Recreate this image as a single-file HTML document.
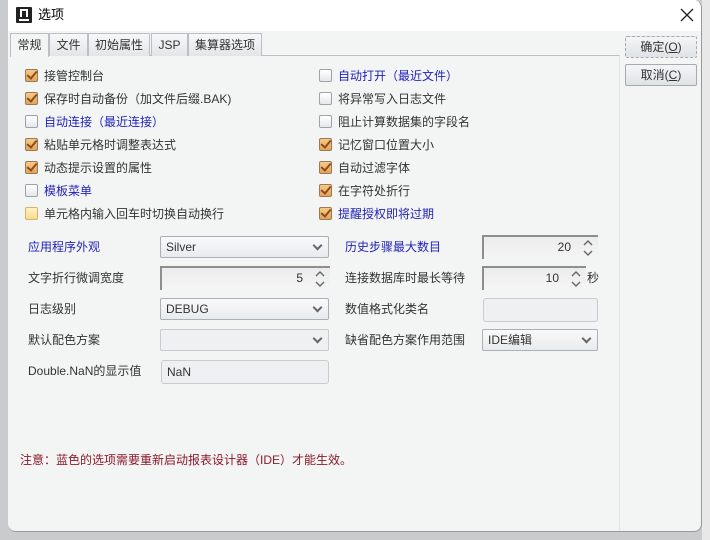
<!DOCTYPE html><html><head><meta charset="utf-8"><style>
*{box-sizing:border-box;margin:0;padding:0}
body{width:710px;height:540px;background:#c9cbcc;position:relative;overflow:hidden;font-family:"Liberation Sans","Noto Sans CJK SC",sans-serif;font-size:12px;color:#333}
.a{position:absolute}
#right{left:702px;top:0;width:8px;height:540px;background:#e8e8e8}
#dlg{left:8px;top:0;width:694px;height:532px;background:#f3f4f4;border-radius:0 8px 8px 8px;border-right:1px solid #999;border-bottom:1px solid #999;overflow:hidden}
#title{left:0;top:0;width:694px;height:31px;background:#fff}
.tab{top:33px;height:23px;border:1px solid #b9bfc4;border-bottom:none;background:linear-gradient(#f6f7f8,#e3e6e9);text-align:center;line-height:22px;font-size:12px;color:#333}
.cb{width:13px;height:13px;border:1px solid #9aa3ab;border-radius:2px;background:linear-gradient(#fff,#e4e8ec)}
.cb.on{background:linear-gradient(#f6c98a,#e3a45a);border-color:#9a7a55}
.cb.on:after{content:"";position:absolute;left:3px;top:-1px;width:4px;height:8px;border-right:2px solid #8a4d1c;border-bottom:2px solid #8a4d1c;transform:rotate(40deg)}
.cb.y{background:linear-gradient(#fff3c4,#fbd98a);border-color:#d1b372}
.t{font-size:12px;line-height:16px;white-space:nowrap}
.blue{color:#2323b8}
.sel{height:22px;border:1px solid #a9b0b7;border-radius:2px;background:linear-gradient(#f8f9fa,#e8ebee);padding-left:5px;line-height:20px}
.sel:after{content:"";position:absolute;right:7px;top:5px;width:5px;height:5px;border-right:2px solid #666;border-bottom:2px solid #666;transform:rotate(45deg)}
.sp{height:24px;border-top:2px solid #8e8e8e;border-left:2px solid #8e8e8e;background:linear-gradient(#ececec,#f5f5f5);text-align:right;padding-right:27px;line-height:20px}
.sp svg{position:absolute;right:4px;top:2px}
.tf{height:24px;border:1px solid #c7ccd1;border-radius:3px;background:#eef0f1;padding-left:5px;line-height:22px}
.btn{left:617px;width:72px;height:22px;border:1px solid #a4abb2;border-radius:2px;background:linear-gradient(#f4f5f6,#dfe3e6);text-align:center;line-height:20px;font-size:12px}
</style></head><body>
<div class="a" id="right"></div>
<div class="a" id="dlg">
<div class="a" id="title">
<div class="a" style="left:8px;top:7px;width:16px;height:16px;background:#222;border-radius:1px"><div class="a" style="left:4px;top:2px;width:8px;height:8px;border:2px solid #fff;border-bottom:none"></div><div class="a" style="left:3px;top:12px;width:10px;height:2px;background:#fff"></div></div>
<div class="a t" style="left:30px;top:7px;font-size:13px;color:#000">选项</div>
<svg class="a" style="left:672px;top:8px" width="14" height="14"><path d="M1 1L13 13M13 1L1 13" stroke="#222" stroke-width="1.3"/></svg>
</div>
<div class="a" style="left:2px;top:55px;width:610px;height:480px;border-top:1px solid #b9bfc4;border-right:1px solid #e3e6e8"></div>
<div class="a tab" style="left:2px;width:39px;background:#f3f4f4;height:24px">常规</div>
<div class="a tab" style="left:41px;width:39px">文件</div>
<div class="a tab" style="left:80px;width:62px">初始属性</div>
<div class="a tab" style="left:143px;width:37px">JSP</div>
<div class="a tab" style="left:180px;width:74px">集算器选项</div>
<div class="a btn" style="top:36px;border-style:dashed">确定(<u>O</u>)</div>
<div class="a btn" style="top:64px">取消(<u>C</u>)</div>

<div class="a cb on" style="left:17px;top:69px"></div><div class="a t" style="left:36px;top:68px">接管控制台</div>
<div class="a cb on" style="left:17px;top:92px"></div><div class="a t" style="left:36px;top:91px">保存时自动备份（加文件后缀.BAK)</div>
<div class="a cb" style="left:17px;top:115px"></div><div class="a t blue" style="left:36px;top:114px">自动连接（最近连接）</div>
<div class="a cb on" style="left:17px;top:138px"></div><div class="a t" style="left:36px;top:137px">粘贴单元格时调整表达式</div>
<div class="a cb on" style="left:17px;top:161px"></div><div class="a t" style="left:36px;top:160px">动态提示设置的属性</div>
<div class="a cb" style="left:17px;top:184px"></div><div class="a t blue" style="left:36px;top:183px">模板菜单</div>
<div class="a cb y" style="left:17px;top:207px"></div><div class="a t" style="left:36px;top:206px">单元格内输入回车时切换自动换行</div>

<div class="a cb" style="left:311px;top:69px"></div><div class="a t blue" style="left:330px;top:68px">自动打开（最近文件）</div>
<div class="a cb" style="left:311px;top:92px"></div><div class="a t" style="left:330px;top:91px">将异常写入日志文件</div>
<div class="a cb" style="left:311px;top:115px"></div><div class="a t" style="left:330px;top:114px">阻止计算数据集的字段名</div>
<div class="a cb on" style="left:311px;top:138px"></div><div class="a t" style="left:330px;top:137px">记忆窗口位置大小</div>
<div class="a cb on" style="left:311px;top:161px"></div><div class="a t" style="left:330px;top:160px">自动过滤字体</div>
<div class="a cb on" style="left:311px;top:184px"></div><div class="a t" style="left:330px;top:183px">在字符处折行</div>
<div class="a cb on" style="left:311px;top:207px"></div><div class="a t blue" style="left:330px;top:206px">提醒授权即将过期</div>

<div class="a t blue" style="left:20px;top:239px">应用程序外观</div>
<div class="a sel" style="left:152px;top:236px;width:169px">Silver</div>
<div class="a t" style="left:20px;top:270px">文字折行微调宽度</div>
<div class="a sp" style="left:152px;top:266px;width:170px">5<svg width="12" height="18"><path d="M2 6L6 2L10 6M2 12L6 16L10 12" stroke="#666" stroke-width="1.4" fill="none"/></svg></div>
<div class="a t" style="left:20px;top:301px">日志级别</div>
<div class="a sel" style="left:152px;top:298px;width:169px">DEBUG</div>
<div class="a t" style="left:20px;top:332px">默认配色方案</div>
<div class="a sel" style="left:152px;top:329px;width:169px;background:#eef0f1;border-color:#c7ccd1"></div>
<div class="a t" style="left:20px;top:363px">Double.NaN的显示值</div>
<div class="a tf" style="left:153px;top:360px;width:168px">NaN</div>

<div class="a t blue" style="left:337px;top:239px">历史步骤最大数目</div>
<div class="a sp" style="left:474px;top:235px;width:116px">20<svg width="12" height="18"><path d="M2 6L6 2L10 6M2 12L6 16L10 12" stroke="#666" stroke-width="1.4" fill="none"/></svg></div>
<div class="a t" style="left:337px;top:270px">连接数据库时最长等待</div>
<div class="a sp" style="left:474px;top:266px;width:104px">10<svg width="12" height="18"><path d="M2 6L6 2L10 6M2 12L6 16L10 12" stroke="#666" stroke-width="1.4" fill="none"/></svg></div>
<div class="a t" style="left:579px;top:270px">秒</div>
<div class="a t" style="left:337px;top:301px">数值格式化类名</div>
<div class="a tf" style="left:475px;top:298px;width:115px"></div>
<div class="a t" style="left:337px;top:332px">缺省配色方案作用范围</div>
<div class="a sel" style="left:474px;top:329px;width:116px">IDE编辑</div>

<div class="a t" style="left:12px;top:452px;color:#8b1a2a">注意：蓝色的选项需要重新启动报表设计器（IDE）才能生效。</div>
</div>
</body></html>
